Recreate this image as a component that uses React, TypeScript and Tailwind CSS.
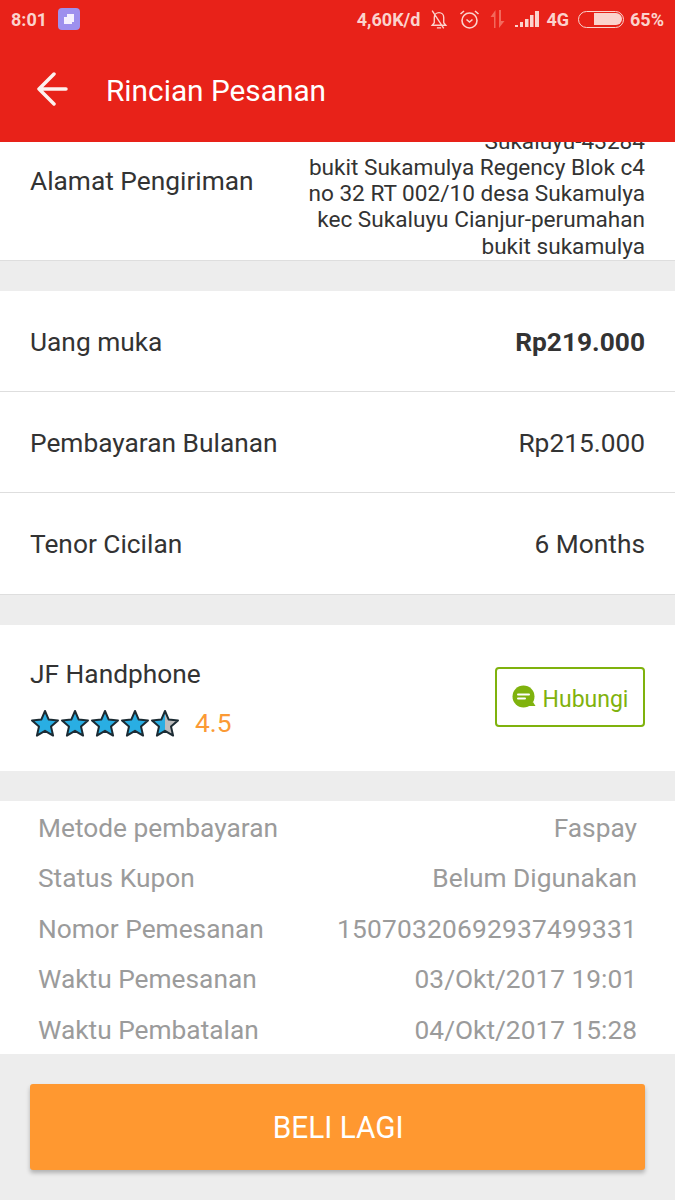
const font = "font-['Roboto',sans-serif]";

const Star = ({ half }: { half?: boolean }) => (
  <svg width="30" height="28" viewBox="0 0 30 28">
    <path d="M15 2l3.700 8.600 9.300.8-7 6.100 2.100 9.100-8.100-4.800-8.100 4.800 2.100-9.100-7-6.100 9.300-.8z" fill={half ? "#bcbcbc" : "#29aee3"} />
    {half && <path d="M15 2v19.800l-8.100 4.800 2.100-9.100-7-6.100 9.300-.8z" fill="#29aee3" />}
    <path d="M15 2l3.700 8.600 9.300.8-7 6.100 2.100 9.100-8.100-4.800-8.100 4.800 2.100-9.100-7-6.100 9.300-.8z" fill="none" stroke="#1c2b33" strokeWidth="2" strokeLinejoin="round" />
  </svg>
);

const StatusBar = () => (
  <div className="flex h-[38px] items-center justify-between px-[11px] text-[18px] font-bold text-[#fbd3cd]">
    <div className="flex items-center gap-[11px]">
      <span>8:01</span>
      <div className="flex h-[22px] w-[22px] items-center justify-center rounded-[4px] bg-[#9d90ee]">
        <svg width="12" height="12" viewBox="0 0 12 12">
          <path d="M4 1h7v8H9v2H1V4h3z" fill="#f4f1ff" />
        </svg>
      </div>
    </div>
    <div className="flex items-center">
      <span>4,60K/d</span>
      <svg className="ml-[9px]" width="20" height="21" viewBox="2 0 16 20" fill="none" stroke="#fbd3cd" strokeWidth="1.300">
        <path d="M3.500 15.500h13l-2-2.500V8a4.500 4.500 0 0 0-9 0v5zM8 18h4M3.500 1.500l11 17" />
      </svg>
      <svg className="ml-[10px]" width="21" height="21" viewBox="0 0 21 21" fill="none" stroke="#fbd3cd" strokeWidth="1.600">
        <circle cx="10.500" cy="11.500" r="7.500" />
        <path d="M7.500 10.500l3 2.500 3-2.500M1.500 5l3.500-3M19.500 5L16 2" />
      </svg>
      <svg className="ml-[9px]" width="17" height="18" viewBox="0 0 17 18" fill="#f3695c">
        <path d="M5 18V7H1.500L6.500 0v18zM10 0v18l5.500-7H12V0z" />
      </svg>
      <svg className="ml-[9px]" width="25" height="18" viewBox="0 0 25 18" fill="#fbd3cd">
        <path d="M0 15h3v2H0zM5 12h3v5H5zM10 9h3.500v8H10zM15 5h3.500v12H15zM20 1h4v16h-4z" />
      </svg>
      <span className="ml-[6px]">4G</span>
      <div className="ml-[9px] flex h-[17px] w-[46px] rounded-full border-[1.500px] border-[#fbd3cd] p-[1.500px]">
        <div className="ml-[13px] w-[28px] rounded-r-full bg-[#fbd3cd]" />
      </div>
      <span className="ml-[6px]">65%</span>
    </div>
  </div>
);

const Row = ({ label, value, bold, border }: { label: string; value: string; bold?: boolean; border?: boolean }) => (
  <div className={`flex h-[101px] items-center justify-between px-[30px] pt-[3px] ${border ? "border-b border-[#dedede]" : ""}`}>
    <span>{label}</span>
    <span className={bold ? "font-bold" : ""}>{value}</span>
  </div>
);

const details = [
  ["Metode pembayaran", "Faspay"],
  ["Status Kupon", "Belum Digunakan"],
  ["Nomor Pemesanan", "15070320692937499331"],
  ["Waktu Pemesanan", "03/Okt/2017 19:01"],
  ["Waktu Pembatalan", "04/Okt/2017 15:28"],
];

export default function App() {
  return (
    <div className={`${font} flex h-[1200px] w-[675px] flex-col overflow-hidden bg-[#ededed] text-[26.300px] text-[#333333]`}>
      <header className="relative z-10 h-[142px] shrink-0 bg-[#e82219] text-white">
        <StatusBar />
        <div className="flex h-[104px] items-center pl-[37px]">
          <svg className="mb-[2px]" width="31" height="34" viewBox="0 0 31 34" fill="none" stroke="#fdf1ee" strokeWidth="3.500" strokeLinecap="round" strokeLinejoin="round">
            <path d="M17 2L2 17l15 15M2 17h27" />
          </svg>
          <span className="ml-[38px] mt-[2px] text-[29.800px]">Rincian Pesanan</span>
        </div>
      </header>

      <section className="flex h-[119px] shrink-0 items-center justify-between overflow-hidden border-b border-[#dedede] bg-white px-[30px]">
        <span className="pb-[38px]">Alamat Pengiriman</span>
        <div className="flex h-[118px] flex-col justify-end text-right text-[22.600px] leading-[26.300px]">
          <div>Sukaluyu-43284</div>
          <div>bukit Sukamulya Regency Blok c4</div>
          <div>no 32 RT 002/10 desa Sukamulya</div>
          <div>kec Sukaluyu Cianjur-perumahan</div>
          <div>bukit sukamulya</div>
        </div>
      </section>

      <section className="mt-[30px] shrink-0 border-b border-[#dedede] bg-white">
        <Row label="Uang muka" value="Rp219.000" bold border />
        <Row label="Pembayaran Bulanan" value="Rp215.000" border />
        <Row label="Tenor Cicilan" value="6 Months" />
      </section>

      <section className="mt-[30px] flex h-[146px] shrink-0 items-center justify-between bg-white px-[30px]">
        <div>
          <div className="leading-[30px]">JF Handphone</div>
          <div className="mt-[20px] flex h-[28px] items-center">
            <Star />
            <Star />
            <Star />
            <Star />
            <Star half />
            <span className="ml-[15px] mt-[2px] text-[#fb9a35]">4.5</span>
          </div>
        </div>
        <button className="mb-[2px] flex h-[60px] w-[150px] items-center justify-center rounded-[4px] border-2 border-[#7fb20d] text-[#7fb20d]">
          <svg width="24" height="24" viewBox="0 0 24 24">
            <circle cx="11.500" cy="11.500" r="11" fill="#7fb20d" />
            <path d="M15 21h8.500l-2.500-4z" fill="#7fb20d" />
            <path d="M6 9.500h11M6 13.500h7" stroke="#fff" strokeWidth="2" strokeLinecap="round" />
          </svg>
          <span className="ml-[7px] mt-[6px] text-[23px] leading-[26px]">Hubungi</span>
        </button>
      </section>

      <section className="mt-[30px] flex h-[253px] shrink-0 flex-col overflow-hidden bg-white px-[38px] pt-[2px] text-[#9b9b9b]">
        {details.map(([label, value]) => (
          <div key={label} className="flex h-[50.600px] shrink-0 items-center justify-between">
            <span>{label}</span>
            <span className={value.startsWith("1507") ? "tracking-[0.22px]" : ""}>{value}</span>
          </div>
        ))}
      </section>

      <div className="flex flex-1 items-start px-[30px] pt-[30px]">
        <button className="flex h-[86px] w-full items-center justify-center rounded-[3px] bg-[#ff9830] text-white shadow-[0_3px_4px_rgba(0,0,0,0.25)]">
          <span className="ml-[1px] mt-[3px] scale-x-[0.96] text-[31px]">BELI LAGI</span>
        </button>
      </div>
    </div>
  );
}
